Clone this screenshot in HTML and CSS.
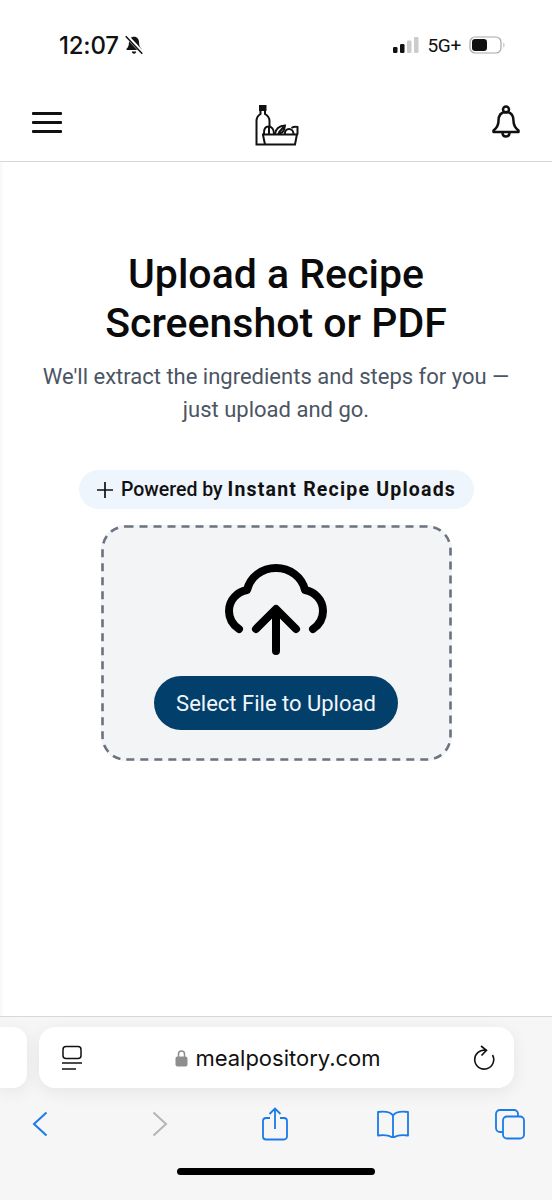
FILE: index.html
```html
<!DOCTYPE html>
<html lang="en">
<head>
  <meta charset="UTF-8">
  <meta name="viewport" content="width=device-width, initial-scale=1.0">
  <title>Mealpository Upload</title>
  <link rel="stylesheet" href="styles.css">
</head>
<body>
  <div class="phone">
    <div class="status-bar">
      <div class="status-left">
        <span class="clock">12:07</span>
        <svg class="muted-bell" viewBox="0 0 20 20" width="22" height="22">
          <path d="M10 2.500c-3 0-4.600 2.400-4.600 5.200 0 3-.8 4.300-2.200 5.800v1h13.600v-1c-1.400-1.500-2.200-2.800-2.200-5.800 0-2.800-1.600-5.200-4.600-5.200z" fill="#111"/>
          <path d="M8 16h4c0 1.200-.9 2-2 2s-2-.8-2-2z" fill="#111"/>
          <path d="M3 1.500l15 16" stroke="#fff" stroke-width="3.400"/>
          <path d="M2.500 2l15 16" stroke="#111" stroke-width="1.400"/>
        </svg>
      </div>
      <div class="status-right">
        <svg class="signal" viewBox="0 0 26 18" width="26" height="18">
          <rect x="0" y="11" width="4.500" height="6" rx="1.200" fill="#111"/>
          <rect x="7" y="8" width="4.500" height="9" rx="1.200" fill="#111"/>
          <rect x="14" y="4.500" width="4.500" height="12.500" rx="1.200" fill="#ccc"/>
          <rect x="21" y="1" width="4.500" height="16" rx="1.200" fill="#ccc"/>
        </svg>
        <span class="network">5G+</span>
        <svg class="battery" viewBox="0 0 37 18" width="37" height="18">
          <rect x="1" y="1" width="31" height="16" rx="5" fill="none" stroke="#a8a8a8" stroke-width="1.200"/>
          <rect x="3" y="3" width="15" height="12" rx="3.200" fill="#111"/>
          <path d="M34.500 6.500c1.200.5 1.200 4.500 0 5z" fill="#a8a8a8"/>
        </svg>
      </div>
    </div>

    <header class="site-nav">
      <svg class="nav-icon" viewBox="0 0 30 24" width="30" height="24">
        <path d="M1 3.500h28M1 12.500h28M1 21.500h28" stroke="#111" stroke-width="2.800" stroke-linecap="round"/>
      </svg>
      <svg class="logo" viewBox="0 0 44 41" width="44" height="41" fill="none" stroke="#111" stroke-width="2">
        <path d="M5 1h5.500v4H5z" fill="#111"/>
        <path d="M5.500 5v4C3 10.500 1.500 12.500 1.500 16v23.500h38.500l2-10.500M10 5v4c2.500 1.500 4.500 3.500 4.500 7v6"/>
        <path d="M7 29.500h35.500M8 30l2 9.500"/>
        <path d="M9 29c-.5-5 1.500-7.500 4.500-7.500s5.500 2.500 5.500 7.500M14 29v-7"/>
        <path d="M20 29c.5-4.500 4-8.500 10-8.500-.5 5-3 8.500-7.500 8.500M23.500 28l5-6"/>
        <path d="M30 29c-.5-3 1.500-5 4-5s4.500 2 4.500 5M36.500 23c1.500-1 3.500-1.500 6-1v7.500"/>
      </svg>
      <svg class="nav-icon" viewBox="0 0 30 34" width="30" height="34" fill="none" stroke="#111" stroke-width="2.500">
        <circle cx="15" cy="4.500" r="3"/>
        <path d="M15 7c-5 0-7.500 3.500-7.500 9 0 5-1.800 7-5 9.500v1.500h25v-1.500c-3.200-2.500-5-4.500-5-9.500 0-5.500-2.500-9-7.500-9z" stroke-linejoin="round"/>
        <path d="M11.500 27.500c0 2.500 1.500 4 3.500 4s3.500-1.500 3.500-4"/>
      </svg>
    </header>

    <main class="page">
      <h1 class="title">Upload a Recipe<br>Screenshot or PDF</h1>
      <p class="subtitle">We'll extract the ingredients and steps for you —<br>just upload and go.</p>

      <div class="chip">
        <svg viewBox="0 0 18 18" width="18" height="18">
          <path d="M9 1v16M1 9h16" stroke="#111" stroke-width="1.700"/>
        </svg>
        <span>Powered by <strong>Instant Recipe Uploads</strong></span>
      </div>

      <section class="dropzone">
        <svg class="cloud" viewBox="0 0 102 92" width="102" height="92" fill="none" stroke="#000" stroke-width="8" stroke-linecap="round" stroke-linejoin="round">
          <path d="M14 65C8 61 4 55 4 47c0-11 8-19 18-21C25 13 37 4 51 4s26 9 29 22c10 2 18 10 18 21 0 8-4 14-10 18"/>
          <path d="M51 87V47M31 65l20-20 20 20"/>
        </svg>
        <button class="upload-btn" type="button">Select File to Upload</button>
      </section>
    </main>

    <footer class="safari">
      <div class="tab-row">
        <div class="tab-peek"></div>
        <div class="address-bar">
          <svg viewBox="0 0 22 26" width="22" height="26" fill="none" stroke="#111" stroke-width="1.500">
            <rect x="2" y="1.500" width="18" height="12" rx="3"/>
            <path d="M1 18h20M1 24h14"/>
          </svg>
          <div class="url">
            <svg viewBox="0 0 13 18" width="13" height="18">
              <path d="M3.500 8V5a3 3 0 0 1 6 0v3" fill="none" stroke="#8e8e8e" stroke-width="1.500"/>
              <rect x="0.500" y="7.500" width="12" height="10" rx="2" fill="#8e8e8e"/>
            </svg>
            <span>mealpository.com</span>
          </div>
          <svg viewBox="0 0 22 26" width="22" height="26" fill="none" stroke="#111" stroke-width="1.600">
            <path d="M13 5.300A9.500 9.500 0 1 0 19.500 10"/>
            <path d="M8 1l5.500 4.300L8.500 10.500"/>
          </svg>
        </div>
      </div>
      <nav class="toolbar">
        <span class="tool">
          <svg viewBox="0 0 16 26" width="16" height="26" fill="none" stroke="#1a7ae8" stroke-width="2">
            <path d="M14.500 1.500L2 13l12.500 11.500"/>
          </svg>
        </span>
        <span class="tool tool-forward">
          <svg viewBox="0 0 16 26" width="16" height="26" fill="none" stroke="#b5b5b5" stroke-width="2">
            <path d="M1.500 1.500L14 13 1.500 24.500"/>
          </svg>
        </span>
        <span class="tool">
          <svg viewBox="0 0 26 34" width="26" height="34" fill="none" stroke="#1a7ae8" stroke-width="1.800">
            <path d="M8 11H4a3 3 0 0 0-3 3v15.500a3 3 0 0 0 3 3h18a3 3 0 0 0 3-3V14a3 3 0 0 0-3-3h-4"/>
            <path d="M13 22V1.500M7.500 7L13 1.500 18.500 7"/>
          </svg>
        </span>
        <span class="tool">
          <svg viewBox="0 0 32 28" width="32" height="28" fill="none" stroke="#1a7ae8" stroke-width="1.800" stroke-linejoin="round">
            <path d="M16 5.500C13.500 2 9 1 1 2v23.500c7-1 12 0 15 2.500 3-2.500 8-3.500 15-2.500V2c-8-1-12.500 0-15 3.500zM16 5.500V28"/>
          </svg>
        </span>
        <span class="tool">
          <svg viewBox="0 0 30 31" width="30" height="31" fill="none" stroke="#1a7ae8" stroke-width="1.800">
            <path d="M23 7V5a4 4 0 0 0-4-4H5a4 4 0 0 0-4 4v14a4 4 0 0 0 4 4h2"/>
            <rect x="8" y="7.500" width="21" height="22" rx="4"/>
          </svg>
        </span>
      </nav>
      <div class="home-bar"></div>
    </footer>
  </div>
</body>
</html>
```

FILE: styles.css
```css
* {
  box-sizing: border-box;
}

body {
  margin: 0;
  background-color: #ffffff;
  color: #111111;
  font-family: Roboto, sans-serif;
}

.phone {
  width: 552px;
  height: 1200px;
  display: flex;
  flex-direction: column;
  overflow: hidden;
}

/* status bar */
.status-bar {
  height: 95px;
  padding: 29px 46px 0 59px;
  display: flex;
  justify-content: space-between;
  align-items: flex-start;
  font-family: Inter, sans-serif;
}

.status-left {
  display: flex;
  align-items: center;
  gap: 4px;
  height: 32px;
}

.clock {
  font-size: 24px;
  font-weight: 500;
  letter-spacing: -0.2px;
}

.status-right {
  display: flex;
  align-items: center;
  gap: 8px;
  height: 32px;
}

.network {
  font-family: Roboto, sans-serif;
  font-size: 19px;
  letter-spacing: -0.3px;
}

/* site nav */
.site-nav {
  height: 67px;
  padding: 0 32px;
  display: flex;
  justify-content: space-between;
  align-items: center;
  border-bottom: 1.500px solid #d5d7de;
}

.logo {
  margin-bottom: 6px;
}

.site-nav .nav-icon:first-child {
  margin-bottom: 12px;
}

.site-nav .nav-icon:last-child {
  margin-bottom: 12px;
  margin-right: -1px;
}

/* main */
.page {
  flex: 1;
  display: flex;
  flex-direction: column;
  align-items: center;
  padding-top: 88px;
  box-shadow: inset 4px 0 4px -3px rgba(0, 0, 0, 0.05);
}

.title {
  margin: 0;
  font-size: 41px;
  line-height: 49px;
  font-weight: 500;
  text-align: center;
  color: #0b0b0b;
}

.subtitle {
  margin: 12px 0 0;
  font-size: 22px;
  line-height: 33px;
  text-align: center;
  color: #4b5563;
}

.chip {
  margin-top: 44px;
  width: 395px;
  height: 39px;
  border-radius: 20px;
  background-color: #eff5fd;
  display: flex;
  justify-content: center;
  align-items: center;
  gap: 7px;
  font-size: 19.500px;
  font-weight: 500;
}

.chip strong {
  font-weight: 700;
  letter-spacing: 1.2px;
}

.dropzone {
  margin-top: 16px;
  width: 351px;
  height: 236px;
  border-radius: 24px;
  background-color: #f3f4f6;
  background-image: url("data:image/svg+xml,%3Csvg xmlns='http://www.w3.org/2000/svg' width='351' height='236'%3E%3Crect x='1.500' y='1.500' width='348' height='233' rx='23' fill='none' stroke='%236b7280' stroke-width='2.600' stroke-dasharray='8 6'/%3E%3C/svg%3E");
  display: flex;
  flex-direction: column;
  align-items: center;
  padding-top: 39px;
}

.cloud {
  flex: none;
}

.upload-btn {
  margin-top: 20px;
  width: 244px;
  height: 54px;
  border: none;
  border-radius: 27px;
  background-color: #033f6b;
  color: #f2f6fa;
  font-family: Roboto, sans-serif;
  font-size: 22px;
}

/* safari chrome */
.safari {
  height: 184px;
  background-color: #f6f6f6;
  border-top: 1px solid #d8d8d8;
  display: flex;
  flex-direction: column;
}

.tab-row {
  margin-top: 10px;
  display: flex;
  gap: 12px;
}

.tab-peek {
  width: 27px;
  height: 61px;
  background-color: #ffffff;
  border-radius: 0 14px 14px 0;
  box-shadow: 0 4px 18px rgba(0, 0, 0, 0.07);
}

.address-bar {
  width: 475px;
  height: 61px;
  padding: 0 19px 0 22px;
  background-color: #ffffff;
  border-radius: 16px;
  box-shadow: 0 4px 18px rgba(0, 0, 0, 0.07);
  display: flex;
  justify-content: space-between;
  align-items: center;
}

.url {
  display: flex;
  align-items: center;
  gap: 7px;
  font-family: Inter, sans-serif;
  font-size: 22px;
  color: #111111;
}

.toolbar {
  margin-top: 18px;
  padding: 0 22px 0 20px;
  display: flex;
  justify-content: space-between;
  align-items: center;
  height: 36px;
}

.tool {
  width: 40px;
  display: flex;
  justify-content: center;
}

.tool-forward svg {
  margin-left: 5px;
}

.home-bar {
  width: 198px;
  height: 7px;
  margin: 26px auto 0;
  border-radius: 4px;
  background-color: #000000;
}
```
